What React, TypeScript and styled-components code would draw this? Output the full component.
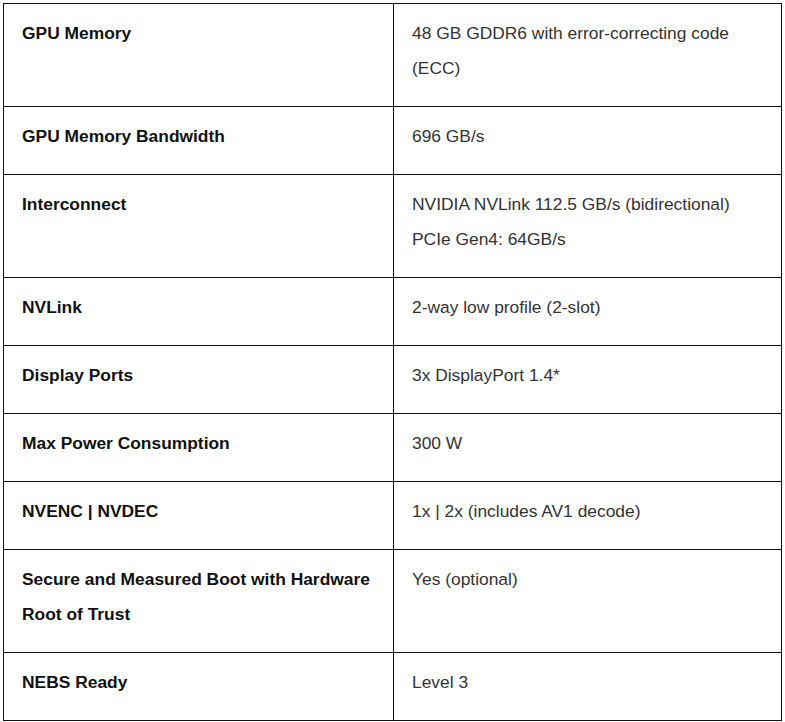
import React from 'react'
import styled, { createGlobalStyle } from 'styled-components'

const GlobalStyle = createGlobalStyle`
  body {
    margin: 0;
    background: #fff;
    font-family: "Liberation Sans", Arial, sans-serif;
  }
`

const Wrapper = styled.div`
  padding: 3px 3px 0 3px;
`

const SpecTable = styled.table`
  width: 779px;
  border-collapse: collapse;
  table-layout: fixed;
  font-size: 17.4px;
  line-height: 35px;
`

const Cell = styled.td<{ $label?: boolean }>`
  width: 50%;
  border: 1px solid #111;
  padding: 12px 18px 20px;
  vertical-align: top;
  font-weight: ${p => (p.$label ? 700 : 400)};
  color: ${p => (p.$label ? '#111' : '#333')};
`

const specs: [string, string[]][] = [
  ['GPU Memory', ['48 GB GDDR6 with error-correcting code (ECC)']],
  ['GPU Memory Bandwidth', ['696 GB/s']],
  ['Interconnect', ['NVIDIA NVLink 112.5 GB/s (bidirectional)', 'PCIe Gen4: 64GB/s']],
  ['NVLink', ['2-way low profile (2-slot)']],
  ['Display Ports', ['3x DisplayPort 1.4*']],
  ['Max Power Consumption', ['300 W']],
  ['NVENC | NVDEC', ['1x | 2x (includes AV1 decode)']],
  ['Secure and Measured Boot with Hardware Root of Trust', ['Yes (optional)']],
  ['NEBS Ready', ['Level 3']],
]

const App: React.FC = () => {
  return (
    <Wrapper>
      <GlobalStyle />
      <SpecTable>
        <colgroup>
          <col style={{ width: 390 }} />
          <col />
        </colgroup>
        <tbody>
          {specs.map(([label, values]) => (
            <tr key={label}>
              <Cell $label>{label}</Cell>
              <Cell>
                {values.map((v, i) => (
                  <React.Fragment key={v}>
                    {i > 0 && <br />}
                    {v}
                  </React.Fragment>
                ))}
              </Cell>
            </tr>
          ))}
        </tbody>
      </SpecTable>
    </Wrapper>
  )
}

export default App
